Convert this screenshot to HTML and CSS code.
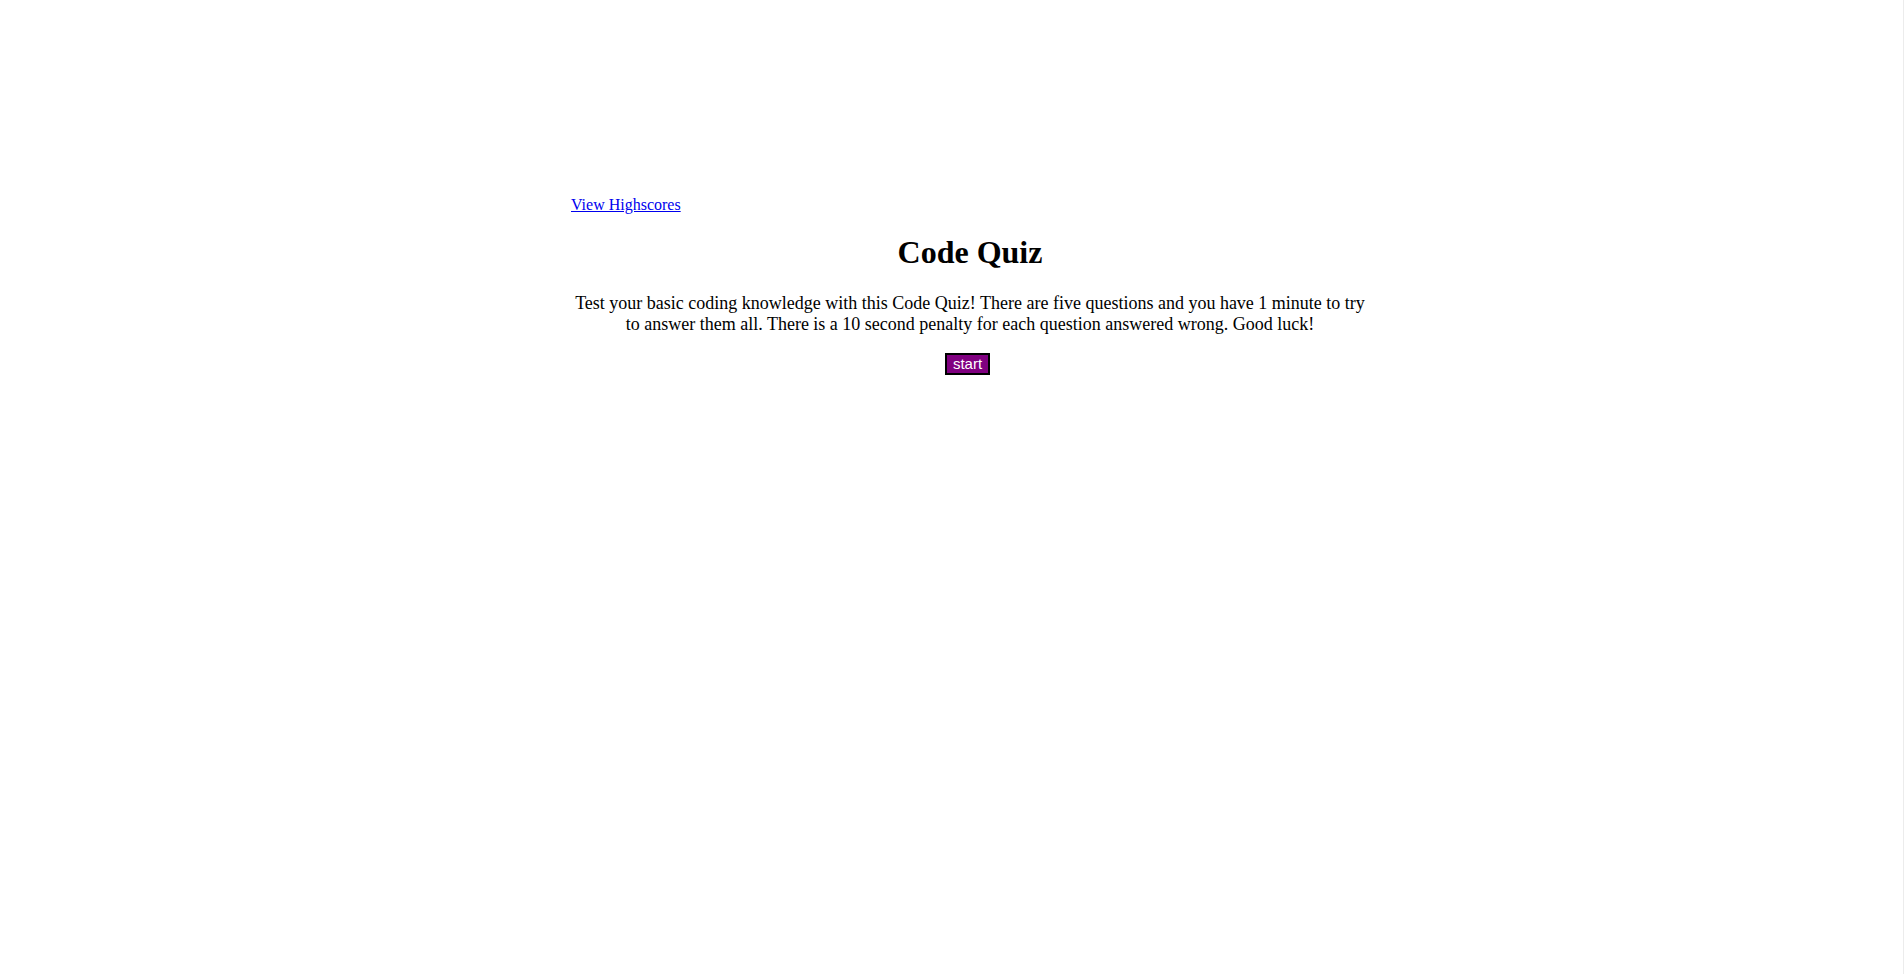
FILE: index.html
```html
<!DOCTYPE html>
<html lang="en">
<head>
<meta charset="utf-8">
<title>Code Quiz</title>
<link rel="stylesheet" href="styles.css">
</head>
<body>
<div class="page">
  <header class="top">
    <a class="scores-link" href="#">View Highscores</a>
  </header>
  <main class="quiz">
    <h1 class="quiz-title">Code Quiz</h1>
    <p class="quiz-intro">Test your basic coding knowledge with this Code Quiz! There are five questions and you have 1 minute to try to answer them all. There is a 10 second penalty for each question answered wrong. Good luck!</p>
    <button class="start-btn" type="button">start</button>
  </main>
</div>
</body>
</html>
```

FILE: styles.css
```css
html {
  min-height: 100%;
  border-right: 1px solid #ececec;
  background: #fff;
}

body {
  margin: 0;
  font-family: "Liberation Serif", "Times New Roman", serif;
  color: #000;
}

.page {
  width: 798px;
  margin-left: 571px;
  padding-top: 196px;
}

.top {
  font-size: 16px;
  line-height: 18px;
}

.scores-link {
  color: #0000ee;
}

.quiz {
  text-align: center;
}

.quiz-title {
  font-size: 32px;
  font-weight: bold;
  margin: 20px 0 0;
  line-height: 37px;
}

.quiz-intro {
  font-size: 18px;
  line-height: 21px;
  margin: 22px 0 18px;
}

.start-btn {
  font-family: "Liberation Sans", Arial, sans-serif;
  font-size: 15px;
  line-height: 16px;
  color: #fff;
  background: #800080;
  border: 2px solid #000;
  padding: 1px 6px;
  margin-left: -5px;
  cursor: pointer;
}
```
